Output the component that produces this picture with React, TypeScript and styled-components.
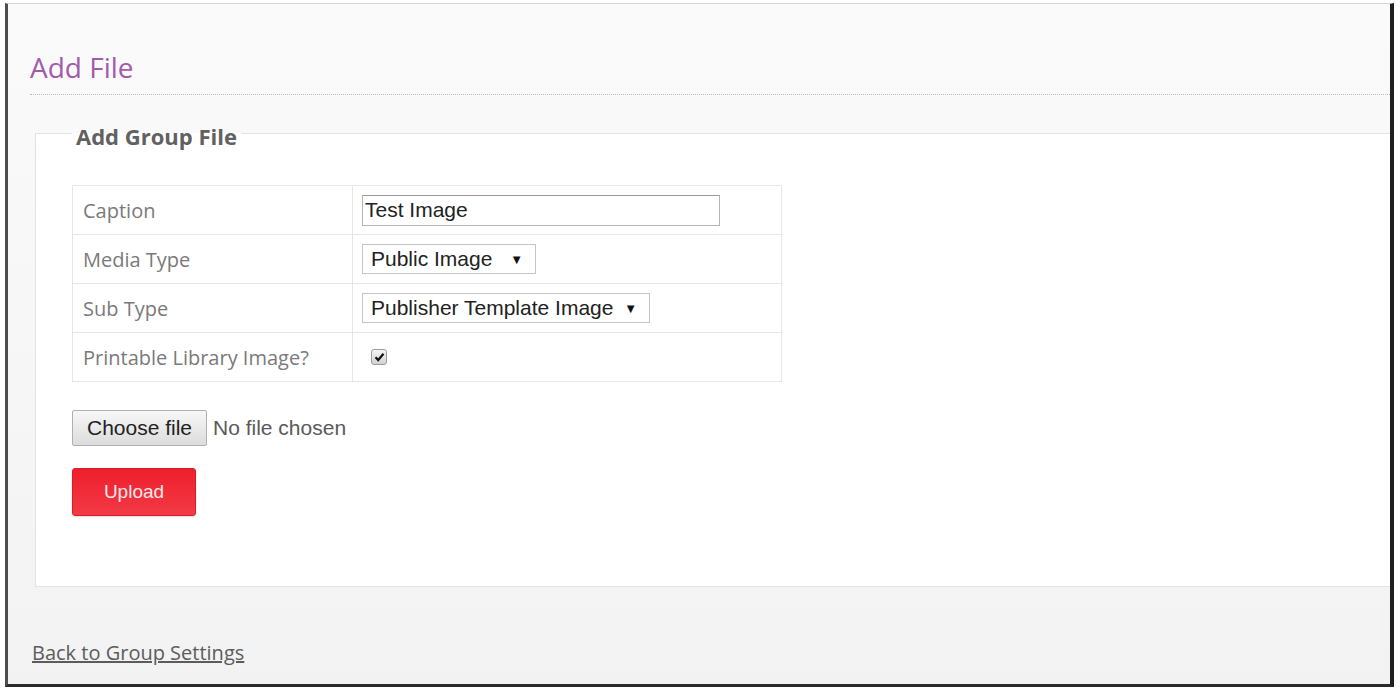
import React from 'react';
import styled, { createGlobalStyle } from 'styled-components';

const GlobalStyle = createGlobalStyle`
  html, body {
    margin: 0;
    padding: 0;
    background: #ffffff;
  }
  body {
    font-family: "Open Sans", "Noto Sans", Arial, sans-serif;
  }
`;

const Frame = styled.div`
  box-sizing: border-box;
  margin: 3px 0 0 5px;
  width: 1389px;
  height: 684px;
  border-top: 1px solid #d4d4d4;
  border-left: 3px solid #4d4d4d;
  border-right: 4px solid #1f1f1f;
  border-bottom: 3px solid #2a2a2a;
  background: linear-gradient(180deg, #fafafa 0%, #f6f6f6 60%, #f2f2f2 100%);
  display: flex;
  flex-direction: column;
  overflow: hidden;
`;

const PageHeader = styled.div`
  margin: 45px 0 0 22px;
  padding-bottom: 8px;
  border-bottom: 1px dotted #b8b8b8;
`;

const Title = styled.h1`
  margin: 0;
  font-size: 28px;
  line-height: 37px;
  font-weight: 400;
  color: #a35bab;
`;

const GroupFieldset = styled.fieldset`
  margin: 26px -4px 0 27px;
  padding: 0 0 70px 36px;
  border: 1px solid #e3e3e3;
  border-right: none;
  background: #ffffff;
  min-width: 0;
`;

const Legend = styled.legend`
  padding: 0 4px;
  font-size: 22px;
  line-height: 24px;
  font-weight: 700;
  color: #616161;
  position: relative;
  top: 3px;
`;

const FormTable = styled.div`
  margin-top: 40px;
  width: 710px;
  display: grid;
  grid-template-columns: 280px 430px;
  border: 1px solid #e6e6e6;
  box-sizing: border-box;
`;

const LabelCell = styled.div<{ last?: boolean }>`
  height: 48px;
  display: flex;
  align-items: center;
  padding-left: 10px;
  font-size: 20px;
  color: #7a7a7a;
  border-right: 1px solid #e6e6e6;
  border-bottom: ${(p) => (p.last ? 'none' : '1px solid #e6e6e6')};
`;

const ValueCell = styled.div<{ last?: boolean }>`
  height: 48px;
  display: flex;
  align-items: center;
  padding-left: 9px;
  border-bottom: ${(p) => (p.last ? 'none' : '1px solid #e6e6e6')};
`;

const TextInput = styled.input`
  box-sizing: border-box;
  width: 358px;
  height: 31px;
  padding: 0 2px;
  border: 1px solid #b5b5b5;
  border-top-color: #9a9a9a;
  font-family: "Liberation Sans", Arial, sans-serif;
  font-size: 21px;
  color: #222;
  outline: none;
  background: #fff;
`;

const SelectBox = styled.div<{ width: number }>`
  box-sizing: border-box;
  width: ${(p) => p.width}px;
  height: 30px;
  display: flex;
  align-items: center;
  justify-content: space-between;
  padding: 0 12px 0 8px;
  border: 1px solid #c4c4c4;
  background: #fff;
  font-family: "Liberation Sans", Arial, sans-serif;
  font-size: 21px;
  color: #222;
`;

const Arrow = styled.span`
  font-size: 13px;
  color: #111;
`;

const CheckBox = styled.span`
  margin-left: 9px;
  width: 16px;
  height: 16px;
  box-sizing: border-box;
  border: 1px solid #9d9d9d;
  border-radius: 3px;
  background: linear-gradient(180deg, #f4f4f4, #d2d2d2);
  display: flex;
  align-items: center;
  justify-content: center;
`;

const FileRow = styled.div`
  margin-top: 28px;
  display: flex;
  align-items: center;
  gap: 6px;
  font-family: "Liberation Sans", Arial, sans-serif;
  font-size: 21px;
`;

const ChooseButton = styled.button`
  box-sizing: border-box;
  width: 135px;
  height: 36px;
  border: 1px solid #b0b0b0;
  border-radius: 2px;
  background: linear-gradient(180deg, #f7f7f7, #dcdcdc);
  font-family: inherit;
  font-size: 21px;
  color: #222;
  padding: 0;
`;

const NoFile = styled.span`
  color: #5a5a5a;
`;

const UploadButton = styled.button`
  margin-top: 22px;
  box-sizing: border-box;
  width: 124px;
  height: 48px;
  border: 1px solid #d81c28;
  border-radius: 3px;
  background: linear-gradient(180deg, #ee1f2c, #f23a45);
  box-shadow: 0 1px 2px rgba(0, 0, 0, 0.15);
  font-family: "Liberation Sans", Arial, sans-serif;
  font-size: 19px;
  color: #fbe9ea;
  padding: 0;
`;

const Footer = styled.div`
  margin: 52px 0 0 24px;
`;

const BackLink = styled.a`
  font-size: 20px;
  color: #5c5c5c;
  text-decoration: underline;
`;

const labels = ['Caption', 'Media Type', 'Sub Type', 'Printable Library Image?'];

export default function App() {
  return (
    <>
      <GlobalStyle />
      <Frame>
        <PageHeader>
          <Title>Add File</Title>
        </PageHeader>
        <GroupFieldset>
          <Legend>Add Group File</Legend>
          <FormTable>
            <LabelCell>{labels[0]}</LabelCell>
            <ValueCell>
              <TextInput defaultValue="Test Image" />
            </ValueCell>
            <LabelCell>{labels[1]}</LabelCell>
            <ValueCell>
              <SelectBox width={174}>
                Public Image <Arrow>▼</Arrow>
              </SelectBox>
            </ValueCell>
            <LabelCell>{labels[2]}</LabelCell>
            <ValueCell>
              <SelectBox width={288}>
                Publisher Template Image <Arrow>▼</Arrow>
              </SelectBox>
            </ValueCell>
            <LabelCell last>{labels[3]}</LabelCell>
            <ValueCell last>
              <CheckBox>
                <svg width="11" height="10" viewBox="0 0 11 10">
                  <path d="M1.5 5.2 L4.2 8 L9.5 1.8" fill="none" stroke="#111" strokeWidth="2.2" />
                </svg>
              </CheckBox>
            </ValueCell>
          </FormTable>
          <FileRow>
            <ChooseButton>Choose file</ChooseButton>
            <NoFile>No file chosen</NoFile>
          </FileRow>
          <UploadButton>Upload</UploadButton>
        </GroupFieldset>
        <Footer>
          <BackLink href="#">Back to Group Settings</BackLink>
        </Footer>
      </Frame>
    </>
  );
}
